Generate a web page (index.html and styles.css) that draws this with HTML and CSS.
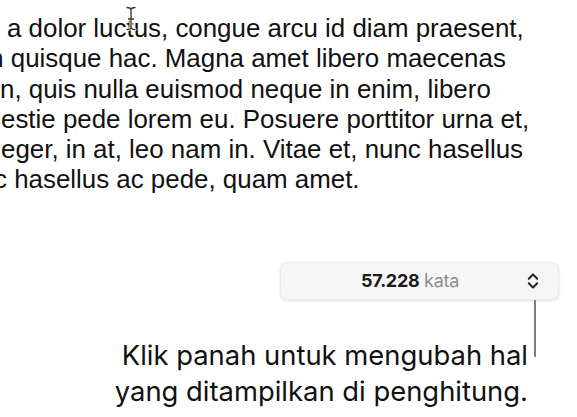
FILE: index.html
```html
<!DOCTYPE html>
<html>
<head>
<meta charset="utf-8">
<link rel="stylesheet" href="styles.css">
</head>
<body>
<div class="page">
  <div class="doc">
    <div class="line l1">a dolor luctus, congue arcu id diam praesent,</div>
    <div class="line l2">m quisque hac. Magna amet libero maecenas</div>
    <div class="line l3">n, quis nulla euismod neque in enim, libero</div>
    <div class="line l4">estie pede lorem eu. Posuere porttitor urna et,</div>
    <div class="line l5">eger, in at, leo nam in. Vitae et, nunc hasellus</div>
    <div class="line l6">c hasellus ac pede, quam amet.</div>
    <svg class="ibeam" width="12" height="25" viewBox="0 0 12 25">
      <path d="M2 1.5 Q6 1.5 6 4 Q6 1.5 10 1.5 M6 4 V21 M2 23.5 Q6 23.5 6 21 Q6 23.5 10 23.5 M3.5 13 H8.5" fill="none" stroke="#fff" stroke-width="3" stroke-linecap="round"/>
      <path d="M2 1.5 Q6 1.5 6 4 Q6 1.5 10 1.5 M6 4 V21 M2 23.5 Q6 23.5 6 21 Q6 23.5 10 23.5 M3.5 13 H8.5" fill="none" stroke="#333" stroke-width="1.3" stroke-linecap="round"/>
    </svg>
  </div>
  <div class="counter-area">
    <div class="counter">
      <span class="count"><b class="num">57.228</b> <span class="unit">kata</span></span>
      <svg class="chev" width="12" height="18" viewBox="0 0 12 18">
        <path d="M1.8 6.8 L6 2.4 L10.2 6.8 M1.8 11.2 L6 15.6 L10.2 11.2" fill="none" stroke="#222" stroke-width="2" stroke-linecap="round" stroke-linejoin="round"/>
      </svg>
    </div>
    <div class="callout">
      <div class="callout-text">Klik panah untuk mengubah hal<br>yang ditampilkan di penghitung.</div>
      <div class="leader"></div>
    </div>
  </div>
</div>
</body>
</html>
```
FILE: styles.css
```css
html, body {
  margin: 0;
  padding: 0;
  background: #ffffff;
}
.page {
  width: 577px;
  height: 417px;
  overflow: hidden;
  position: relative;
  font-family: "Liberation Sans", Arial, sans-serif;
}
.doc {
  position: relative;
  padding-top: 13px;
  color: #111;
  font-size: 25.9px;
  line-height: 30.3px;
}
.line {
  white-space: nowrap;
}
.l1 { margin-left: 7px; }
.l2 { margin-left: -18px; }
.l3 { margin-left: 0px; }
.l4 { margin-left: 1px; }
.l5 { margin-left: 1px; }
.l6 { margin-left: -6px; }
.ibeam {
  position: absolute;
  left: 125px;
  top: 6px;
}
.counter-area {
  display: flex;
  flex-direction: column;
  align-items: flex-end;
  padding-right: 18px;
  margin-top: 67px;
}
.counter {
  width: 279px;
  height: 38px;
  box-sizing: border-box;
  border-radius: 7px;
  background: #f6f6f6;
  border: 1px solid #ebebeb;
  box-shadow: 0 1px 3px rgba(0,0,0,0.12);
  display: flex;
  align-items: center;
  padding: 0 19px 0 0;
}
.count {
  flex: 1;
  text-align: center;
  font-family: "Inter", "Liberation Sans", sans-serif;
  font-size: 18px;
  padding-left: 12px;
  letter-spacing: -0.3px;
}
.num {
  color: #1a1a1a;
  font-weight: 700;
}
.unit {
  color: #8c8c8c;
}
.chev {
  display: block;
}
.callout {
  display: flex;
  align-items: flex-start;
  gap: 6px;
  margin-right: 23px;
}
.callout-text {
  margin-top: 37px;
  text-align: right;
  font-family: "Inter", "Liberation Sans", sans-serif;
  font-size: 27.4px;
  line-height: 36px;
  color: #111;
}
.leader {
  width: 2px;
  height: 57px;
  background: #7d7d7d;
}
```
